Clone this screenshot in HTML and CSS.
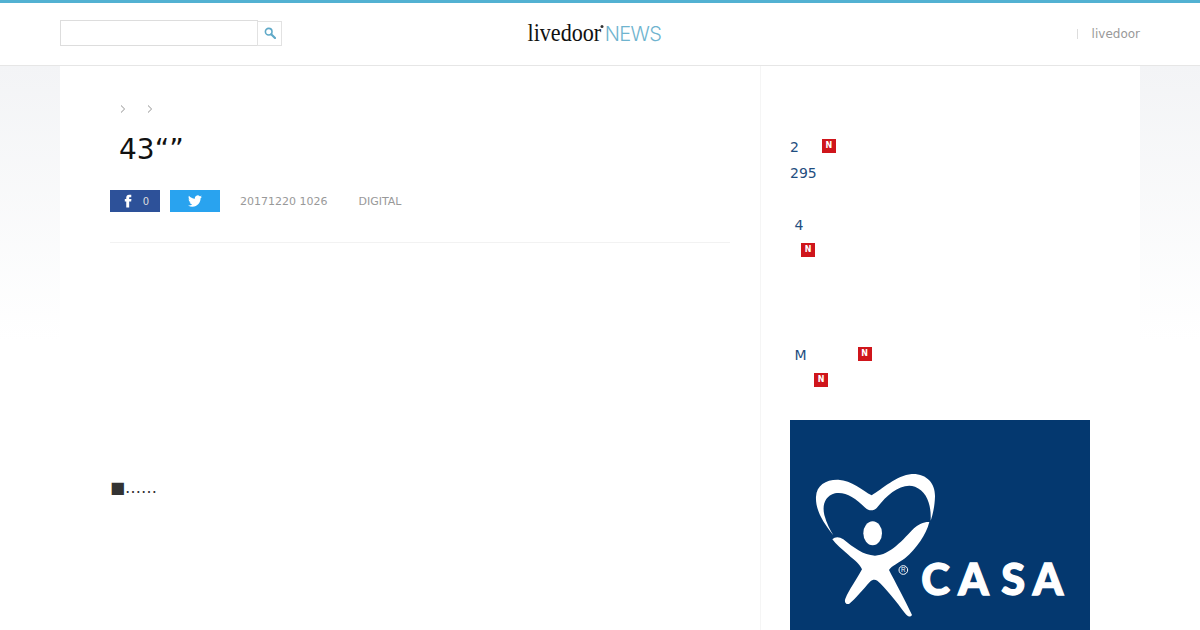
FILE: index.html
```html
<!DOCTYPE html>
<html lang="ja">
<head>
<meta charset="utf-8">
<title>livedoor NEWS</title>
<link rel="stylesheet" href="styles.css">
</head>
<body>
<header class="site-header">
  <div class="header-inner">
    <form class="search">
      <input class="search-input" type="text" aria-label="search">
      <button class="search-btn" type="button" aria-label="search">
        <svg viewBox="0 0 12 12" width="12" height="12"><circle cx="4.7" cy="4.7" r="3.3" fill="none" stroke="#5fa9c8" stroke-width="1.6"/><path d="M7.2 7.2 11 11" stroke="#5fa9c8" stroke-width="2.2" stroke-linecap="round"/></svg>
      </button>
    </form>
    <a class="logo"><span class="logo-live">livedoor</span><span class="logo-dot"></span><span class="logo-news">NEWS</span></a>
    <nav class="header-nav"><span class="nav-sep"></span><span>livedoor</span></nav>
  </div>
</header>
<div class="page-bg">
  <div class="page">
    <main class="article">
      <div class="crumbs">
        <svg class="chev" viewBox="0 0 6 8" width="6" height="8"><path d="M1 .5 4.6 4 1 7.5" fill="none" stroke="#777" stroke-width=".8"/></svg>
        <svg class="chev" viewBox="0 0 6 8" width="6" height="8"><path d="M1 .5 4.6 4 1 7.5" fill="none" stroke="#777" stroke-width=".8"/></svg>
      </div>
      <h1 class="title">43“”</h1>
      <div class="meta">
        <a class="share share-fb">
          <svg viewBox="0 0 24 24" width="14" height="14"><path fill="#fff" d="M14 8.5V6.5c0-.9.6-1.1 1-1.1h2.6V1.1L14 1.1c-4 0-5 3-5 5v2.4H6.5V13H9v10h5V13h3.4l.5-4.5z"/></svg>
          <span class="share-count">0</span>
        </a>
        <a class="share share-tw">
          <svg viewBox="0 0 24 24" width="14" height="14"><path fill="#fff" d="M23.953 4.57a10 10 0 01-2.825.775 4.958 4.958 0 002.163-2.723c-.951.555-2.005.959-3.127 1.184a4.92 4.92 0 00-8.384 4.482C7.69 8.095 4.067 6.13 1.64 3.162a4.822 4.822 0 00-.666 2.475c0 1.71.87 3.213 2.188 4.096a4.904 4.904 0 01-2.228-.616v.06a4.923 4.923 0 003.946 4.827 4.996 4.996 0 01-2.212.085 4.936 4.936 0 004.604 3.417 9.867 9.867 0 01-6.102 2.105c-.39 0-.779-.023-1.17-.067a13.995 13.995 0 007.557 2.209c9.053 0 13.998-7.496 13.998-13.985 0-.21 0-.42-.015-.63A9.935 9.935 0 0024 4.59z"/></svg>
        </a>
        <span class="meta-date">20171220 1026</span>
        <span class="meta-cat">DIGITAL</span>
      </div>
      <p class="body-text">■……</p>
    </main>
    <aside class="sidebar">
      <ul class="links">
        <li class="link">2<span class="badge b-first">N</span></li>
        <li class="link">295</li>
        <li class="link group-a">&nbsp;4</li>
        <li class="link"><span class="badge b-second">N</span></li>
        <li class="link group-b">&nbsp;M<span class="badge b-third">N</span></li>
        <li class="link"><span class="badge b-fourth">N</span></li>
      </ul>
      <div class="ad">
        <svg viewBox="0 -90 900 630" width="300" height="210">
          <path fill="#fff" d="M130 256C98 215 76 180 78 140C80 105 108 88 145 89C185 91 218 122 245 136C275 118 320 76 365 72C410 70 436 100 435 140C434 170 428 195 422 212C424 165 412 125 375 110C335 98 295 130 262 172C252 184 236 184 224 172C195 143 165 124 135 130C105 138 96 165 103 195C110 220 120 240 130 256Z"/>
          <ellipse fill="#fff" cx="248" cy="250" rx="28" ry="36"/>
          <path fill="#fff" d="M127 268C135 260 148 260 160 268C190 292 220 316 255 317C300 316 340 268 372 235C385 223 402 215 418 216C408 255 380 295 345 325C325 340 305 348 297 360C315 395 345 450 366 495C360 503 352 500 345 490C320 455 285 412 262 392C255 388 248 388 240 395C220 417 195 447 178 461C168 465 162 456 166 446C178 418 200 388 216 358C210 342 195 332 175 314C155 297 138 284 127 268Z"/>
          <circle cx="340" cy="360" r="13" fill="none" stroke="#fff" stroke-width="3"/>
          <text class="ad-reg" x="340" y="367" text-anchor="middle">R</text>
          <text class="ad-word" x="394 505 634 728" y="436">CASA</text>
        </svg>
      </div>
    </aside>
  </div>
</div>
</body>
</html>
```
FILE: styles.css
```css
* { box-sizing: border-box; }
html, body { margin: 0; padding: 0; height: 630px; overflow: hidden; background: #fff; }
body { font-family: "DejaVu Sans", sans-serif; color: #222; }

.site-header { height: 66px; border-top: 3px solid #52b1d2; border-bottom: 1px solid #e6e6e6; background: #fff; }
.header-inner { width: 1080px; margin: 0 auto; height: 62px; display: grid; grid-template-columns: 1fr auto 1fr; align-items: center; }
.search { display: flex; align-items: center; margin-bottom: 2px; }
.search-input { width: 198px; height: 26px; border: 1px solid #ddd; background: #fff; padding: 0; margin: 0; outline: 0; }
.search-btn { width: 25px; height: 25px; margin: 0 0 0 -1px; padding: 0; border: 1px solid #e2e2e2; background: #fff; display: flex; align-items: center; justify-content: center; }
.logo { display: flex; align-items: baseline; justify-self: center; margin-bottom: 4px; transform: translateX(-5.5px); }
.logo-live { font: 25px/1 "Liberation Serif", serif; color: #111; display: inline-block; width: 74px; white-space: nowrap; transform: scaleX(.885); transform-origin: left center; }
.logo-dot { width: 3px; height: 3px; background: #333; border-radius: 50%; margin: 0 1px 0 -1px; transform: translateY(-13px); }
.logo-news { font: 300 20px/1 Inter, sans-serif; color: #6fb4cf; letter-spacing: -.6px; }
.header-nav { justify-self: end; display: flex; align-items: center; font-size: 12px; color: #999; gap: 14px; }
.nav-sep { width: 1px; height: 10px; background: #ddd; }

.page-bg { height: 564px; background: linear-gradient(#f3f4f6 0, #fff 275px); overflow: hidden; }
.page { width: 1080px; height: 564px; margin: 0 auto; background: #fff; display: flex; }

.article { width: 701px; padding: 39px 30px 0 50px; border-right: 1px solid #f5f5f5; }
.crumbs { height: 8px; display: flex; gap: 21px; padding-left: 10px; }
.chev { display: block; }
.title { margin: 18px 0 0; padding-left: 9px; height: 38px; font-size: 28px; line-height: 38px; font-weight: 400; color: #111; }
.meta { margin-top: 21px; height: 22px; display: flex; align-items: center; font-size: 11px; color: #999; }
.share { width: 50px; height: 22px; display: flex; align-items: center; justify-content: center; }
.share-fb { background: #2d5199; gap: 8px; margin-right: 10px; }
.share-tw { background: #29a3ef; margin-right: 20px; }
.share-count { color: #ddd; font-size: 10px; }
.meta-date { margin-right: 31px; }
.body-text { margin: 0; border-top: 1px solid #f2f2f2; margin-top: 30px; padding-top: 234px; font-size: 16px; line-height: 22px; color: #333; }

.sidebar { width: 379px; padding: 68px 49px 0 29px; }
.links { list-style: none; margin: 0; padding: 0; }
.link { height: 26px; font-size: 14px; line-height: 26px; color: #1f4e80; display: flex; align-items: center; }
.group-a { margin-top: 26px; }
.group-b { margin-top: 78px; }
.badge { display: flex; align-items: center; justify-content: center; width: 14px; height: 14px; background: #cf151b; color: #fff; font-size: 8px; font-weight: 700; }
.b-first { margin-left: 23px; margin-top: -2px; }
.b-second { margin-left: 11px; margin-top: -2px; }
.b-third { margin-left: 51px; margin-top: -2px; }
.b-fourth { margin-left: 24px; margin-top: -2px; }

.ad { margin-top: 26px; width: 300px; height: 210px; background: #04386f; }
.ad svg { display: block; }
.ad-word { font-family: Lato, sans-serif; font-weight: 900; font-size: 130px; fill: #fff; stroke: #fff; stroke-width: 4px; }
.ad-reg { font-family: "Liberation Sans", sans-serif; font-size: 19px; fill: #fff; }
```
